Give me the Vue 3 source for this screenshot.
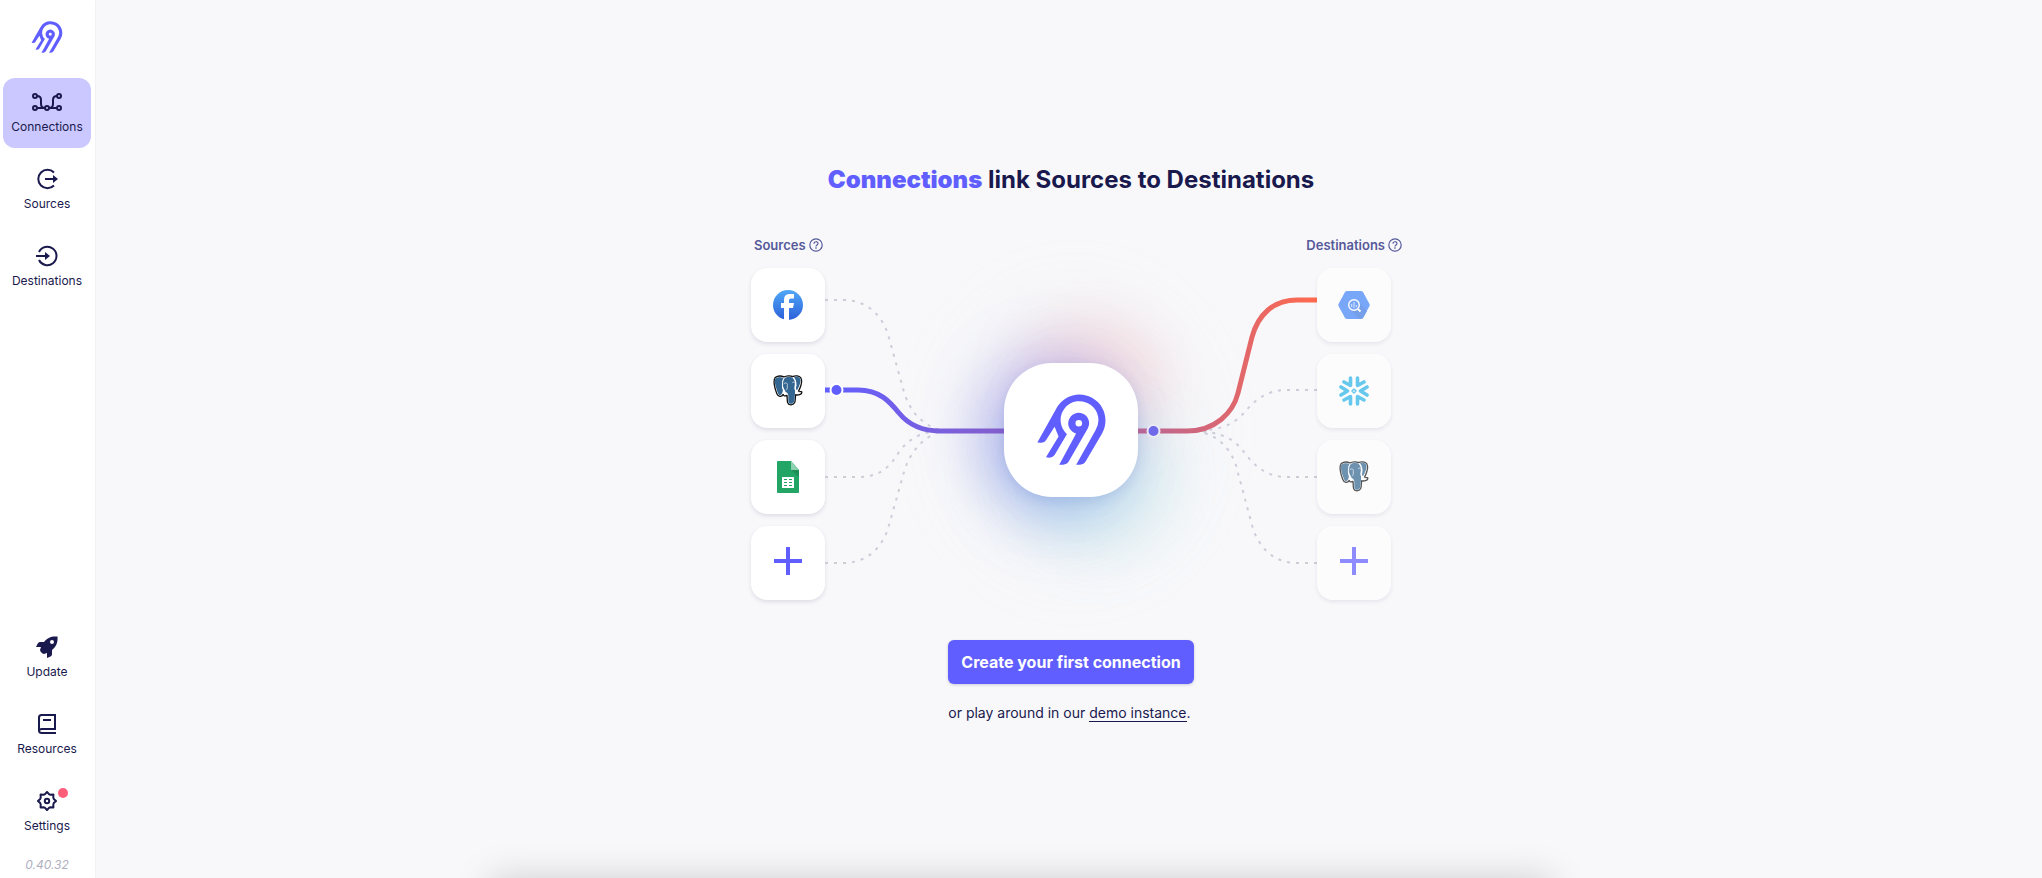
<script setup>
const leftDashes = [
  'M0 32H18C44 32 59 50 64 70L79 124C85 144 98 158 118 163',
  'M0 209H33C55 209 65 199 74 184C83 172 95 163 118 163',
  'M0 295H18C44 295 59 277 64 257L79 204C85 184 98 168 118 163',
]
const rightDashes = [
  'M492 122H462C440 122 428 134 419 145C410 154 400 163 365 163',
  'M492 209H462C440 209 428 196 419 184C410 173 400 163 365 163',
  'M492 295H472C448 295 433 279 427 257L413 205C408 180 390 163 365 163',
]
</script>

<template>
  <svg class="defs" width="0" height="0" aria-hidden="true">
    <symbol id="logo" viewBox="110 102 208 214">
      <path d="M228 315L286.4 211A57 57 0 1 0 200 223L163 286Q157 294 147 294L137 293L175 230L163 201L136 243Q131 250 120 249L111 248L170 143A78.500 78.500 0 0 1 238 103.500A78.500 78.500 0 0 1 306 221L257 305Q251 315 240 315Z" />
      <path fill-rule="evenodd" d="M177 315L228 221A31.500 31.500 0 1 1 263 206L206 305Q200 315 189 315ZM236 180A10 10 0 1 0 236 200A10 10 0 1 0 236 180Z" />
    </symbol>
    <symbol id="elephant" viewBox="40 286 90 94">
      <path class="eo" d="M46 294C54 288 66 289 73 292C79 288 93 287 99 291C107 287 119 288 124 295C130 306 123 323 117 335C120 338 127 334 127 339C127 345 115 348 108 346C107 354 108 363 105 370C100 379 86 378 84 370C82 363 83 356 82 348C76 351 70 349 71 344C65 355 55 352 51 342C45 328 39 303 46 294Z" />
      <path class="ef" d="M47 297C54 291 66 293 72 295C66 302 66 316 68 327C71 333 69 340 64 346C59 350 56 345 53 337C48 322 42 304 47 297Z" />
      <path class="ef" d="M103 293C111 290 118 291 122 297C125 306 119 321 112 332C108 328 109 322 110 316C110 306 108 299 103 293Z" />
      <path class="ef" d="M72 300C77 289 96 289 102 298C108 306 107 318 105 326C108 337 106 345 105 353C105 361 105 371 97 373C85 375 86 366 86 354C86 347 86 342 81 340C76 336 73 330 72 326C68 318 68 307 72 300Z" />
      <path class="ew" d="M72 314C75 308 84 308 83 318C83 325 83 329 79 332M70 327C76 330 75 335 73 341C76 337 82 339 84 347M98 309C103 306 107 308 107 313C106 320 104 326 107 331C110 337 117 338 122 339M74 294C68 302 67 318 69 328M101 294C108 301 111 309 109 323" />
    </symbol>
    <symbol id="plus" viewBox="0 0 28 32">
      <path d="M12 0H16V12H28V16H16V28H12V16H0V12H12Z" />
    </symbol>
    <symbol id="help" viewBox="0 0 14 14">
      <circle cx="7" cy="7" r="6.200" fill="none" stroke="currentColor" stroke-width="1.200" />
      <path d="M5 5.700C5 3.100 9 3.100 9 5.500C9 7 7 6.900 7 8.400" fill="none" stroke="currentColor" stroke-width="1.200" />
      <rect x="6.300" y="9.300" width="1.400" height="1.400" fill="currentColor" />
    </symbol>
  </svg>

  <div class="app">
    <nav class="sidebar">
      <a class="brand" href="#" aria-label="Airbyte"><svg><use href="#logo" /></svg></a>
      <div class="group">
        <a class="item active" href="#connections">
          <span class="icon">
            <svg width="30" height="20" viewBox="0 0 30 20" fill="none" stroke="currentColor" stroke-width="2">
              <circle cx="3" cy="4" r="2" /><circle cx="27" cy="4" r="2" />
              <circle cx="3" cy="16" r="2" /><circle cx="15" cy="16" r="2" /><circle cx="27" cy="16" r="2" />
              <path d="M5 4C8 4 9 6 9 8V12C9 15 10 16 13 16M25 4C22 4 21 6 21 8V12C21 15 20 16 17 16M5 16H13M17 16H25" />
            </svg>
          </span>
          <span>Connections</span>
        </a>
        <a class="item" href="#sources">
          <span class="icon">
            <svg width="22" height="22" viewBox="0 0 22 22">
              <path d="M18 4.500A9.200 9.200 0 1 0 18 17.500" fill="none" stroke="currentColor" stroke-width="2" />
              <path d="M9 10H17V7L22 11L17 15V12H9Z" fill="currentColor" />
            </svg>
          </span>
          <span>Sources</span>
        </a>
        <a class="item" href="#destinations">
          <span class="icon">
            <svg width="22" height="22" viewBox="0 0 22 22">
              <path d="M3 7A9.200 9.200 0 1 1 3 15" fill="none" stroke="currentColor" stroke-width="2" />
              <path d="M0 10H9V7L14 11L9 15V12H0Z" fill="currentColor" />
            </svg>
          </span>
          <span>Destinations</span>
        </a>
      </div>
      <div class="group bottom">
        <a class="item" href="#update">
          <span class="icon">
            <svg width="22" height="22" viewBox="0 0 22 22" fill="currentColor">
              <path fill-rule="evenodd" d="M21.500 .5C15 0 11 2 8 6H4C2.500 6 2 7 1.500 8L0 11H5L4 14C4.500 16 6 17.500 8 18L11 17V22L14.500 20.500C15.500 20 16 19 16 18V14C20 11 22 7 21.500 .5ZM16 4A2 2 0 1 1 16 8A2 2 0 1 1 16 4Z" />
            </svg>
          </span>
          <span>Update</span>
        </a>
        <a class="item" href="#resources">
          <span class="icon">
            <svg width="18" height="20" viewBox="0 0 18 20" fill="none" stroke="currentColor" stroke-width="2">
              <path d="M18 19H4C2 19 1 18 1 16.500V3.500C1 2 2 1 3.500 1H17V15H4C2 15 1 16 1 17M5 6H13" />
            </svg>
          </span>
          <span>Resources</span>
        </a>
        <a class="item" href="#settings">
          <span class="icon">
            <svg width="20" height="20" viewBox="0 0 20 20" fill="none" stroke="currentColor" stroke-width="2" stroke-linejoin="round">
              <path d="M8 3.200L10 1L12 3.200L13.500 3.700L16.400 3.600L16.300 6.500L16.800 8L19 10L16.800 12L16.300 13.500L16.400 16.400L13.500 16.300L12 16.800L10 19L8 16.800L6.500 16.300L3.600 16.400L3.700 13.500L3.200 12L1 10L3.200 8L3.700 6.500L3.600 3.600L6.500 3.700Z" />
              <circle cx="10" cy="10" r="2.200" />
            </svg>
            <i class="alert"></i>
          </span>
          <span>Settings</span>
        </a>
      </div>
      <div class="version">0.40.32</div>
    </nav>

    <main class="main">
      <h1><b>Connections</b> link Sources to Destinations</h1>
      <div class="labels">
        <span>Sources <svg><use href="#help" /></svg></span>
        <span>Destinations <svg><use href="#help" /></svg></span>
      </div>
      <div class="stage">
        <div class="column">
          <button class="card" aria-label="Facebook">
            <svg width="30" height="30" viewBox="0 0 30 30">
              <defs><linearGradient id="fb" x2="0" y2="1"><stop stop-color="#50a8f8" /><stop offset="1" stop-color="#2b60d8" /></linearGradient></defs>
              <circle cx="15" cy="15" r="15" fill="url(#fb)" />
              <path d="M11 30V18H8V13H11V10C11 6 13 4 17 4H21V8.500H18C16.700 8.500 16 9.200 16 10.500V13H21L20 18H16V30Z" fill="#fff" />
            </svg>
          </button>
          <button class="card" aria-label="Postgres"><svg width="30" height="31"><use href="#elephant" /></svg></button>
          <button class="card" aria-label="Google Sheets">
            <svg width="22" height="32" viewBox="0 0 22 32">
              <path d="M1 0H14L22 9V31Q22 32 21 32H1Q0 32 0 31V1Q0 0 1 0Z" fill="#23a566" />
              <path d="M14 9H22V16Z" fill="#1c8f56" /><path d="M14 0L22 9H14Z" fill="#8ed1b1" />
              <path fill="#fff" fill-rule="evenodd" d="M5 16H17V27H5ZM7 18V19H10V18ZM12 18V19H15V18ZM7 21V22H10V21ZM12 21V22H15V21ZM7 24V25H10V24ZM12 24V25H15V24Z" />
            </svg>
          </button>
          <button class="card" aria-label="Add source"><svg width="28" height="32"><use href="#plus" /></svg></button>
        </div>
        <div class="flow">
          <i class="glow halo"></i><i class="glow pink"></i><i class="glow violet"></i><i class="glow blue"></i><i class="glow cyan"></i>
          <svg class="lines" viewBox="0 0 492 332" fill="none">
            <defs>
              <linearGradient id="route" gradientUnits="userSpaceOnUse" x1="0" y1="0" x2="492" y2="0">
                <stop stop-color="#615eff" /><stop offset=".24" stop-color="#7b5fdc" /><stop offset=".36" stop-color="#835ecb" />
                <stop offset=".64" stop-color="#b96896" /><stop offset=".76" stop-color="#d1667b" /><stop offset="1" stop-color="#ff6a4d" />
              </linearGradient>
            </defs>
            <g stroke="#cdcdd9" stroke-width="2" stroke-dasharray="3 6">
              <path v-for="d in leftDashes" :key="d" :d="d" />
              <path v-for="d in rightDashes" :key="d" :d="d" />
            </g>
            <g stroke="url(#route)" stroke-width="5">
              <path d="M0 122H33C55 122 65 134 74 145C83 156 95 163 115 163H180" />
              <path d="M312 163H362C390 163 408 145 413 125L427 69C433 47 448 32 472 32H492" />
            </g>
            <circle cx="11.500" cy="122" r="6" fill="#615eff" stroke="#fff" stroke-width="2" />
            <circle cx="328.500" cy="163" r="6" fill="#6f69ea" stroke="#e9e9f3" stroke-width="2" />
          </svg>
          <div class="hub"><svg><use href="#logo" /></svg></div>
        </div>
        <div class="column faded">
          <button class="card" aria-label="BigQuery">
            <svg width="32" height="30" viewBox="0 0 32 30">
              <path d="M9 1H23Q24 1 25 2L31.500 14Q32 15 31.500 16L25 28Q24 29 23 29H9Q8 29 7 28L.5 16Q0 15 .5 14L7 2Q8 1 9 1Z" fill="#4386fa" />
              <path d="M20 11L29 21L25 28Q24 29 23 29H21L12 19Z" fill="#3f7ae0" />
              <circle cx="16" cy="15" r="5.300" fill="#4386fa" stroke="#fff" stroke-width="1.400" />
              <path d="M20 19L22.500 21.500" stroke="#fff" stroke-width="1.800" />
              <path d="M13.700 14V17M16 12V18M18.300 15V17" stroke="#cfe0ff" stroke-width="1" />
            </svg>
          </button>
          <button class="card" aria-label="Snowflake">
            <svg width="30" height="30" viewBox="0 0 30 30" fill="none" stroke="#29b5e8" stroke-width="3.600" stroke-linecap="round" stroke-linejoin="round">
              <path d="M11.500 2V9.500L5 6M18.500 2V9.500L25 6M11.500 28V20.500L5 24M18.500 28V20.500L25 24M2 11L8.500 15L2 19M28 11L21.500 15L28 19" />
              <path d="M15 13L17 15L15 17L13 15Z" stroke-width="1.500" />
            </svg>
          </button>
          <button class="card" aria-label="Postgres"><svg width="30" height="31"><use href="#elephant" /></svg></button>
          <button class="card" aria-label="Add destination"><svg width="28" height="32"><use href="#plus" /></svg></button>
        </div>
      </div>
      <div class="actions">
        <button class="primary">Create your first connection</button>
        <p>or play around in our <a href="#demo">demo instance</a>.</p>
      </div>
    </main>
    <div class="tray"></div>
  </div>
</template>

<style>
body { background: #f8f8fb; }
</style>

<style scoped>
* { box-sizing: border-box; }
.defs { position: absolute; }
.app {
  display: flex;
  min-height: 100vh;
  font-family: Inter, "Liberation Sans", sans-serif;
  color: #1a194d;
}
.sidebar {
  display: flex;
  flex-direction: column;
  flex: none;
  width: 95px;
  padding: 21px 4px 5px 3px;
  background: #fff;
  box-shadow: 0 0 2px rgba(26, 25, 77, .08);
}
.brand { display: block; height: 32px; margin: 0 auto 25px; }
.brand svg { display: block; width: 32px; height: 32px; fill: #615eff; }
.group { display: flex; flex-direction: column; gap: 7px; }
.bottom { margin-top: auto; }
.item {
  display: flex;
  flex-direction: column;
  align-items: center;
  gap: 5px;
  height: 70px;
  padding-top: 12px;
  border-radius: 12px;
  color: #1a194d;
  font-size: 12px;
  line-height: 16px;
  text-decoration: none;
}
.active { background: #cbc8ff; }
.icon {
  position: relative;
  display: flex;
  align-items: center;
  justify-content: center;
  width: 30px;
  height: 24px;
}
.alert {
  position: absolute;
  top: -1px;
  right: -6px;
  width: 10px;
  height: 10px;
  border-radius: 50%;
  background: #ff5e7b;
}
.version {
  margin-top: 10px;
  color: #afafc1;
  font-size: 12px;
  line-height: 16px;
  font-style: italic;
  text-align: center;
}
.main {
  display: flex;
  flex: 1;
  flex-direction: column;
  align-items: center;
  justify-content: center;
  padding: 8px 0 0 5px;
}
h1 { margin: 0 0 41px; font-size: 24px; line-height: 32px; font-weight: 700; }
h1 b { color: #615eff; font-weight: 900; }
.labels {
  display: flex;
  justify-content: space-between;
  width: 662px;
  padding-left: 14px;
  margin-bottom: 15px;
  color: #565a9a;
  font-size: 13px;
  line-height: 16px;
  font-weight: 600;
}
.labels span { display: flex; align-items: center; gap: 3px; }
.labels svg { width: 14px; height: 14px; }
.stage { display: flex; }
.column { position: relative; display: flex; flex-direction: column; gap: 12px; }
.card {
  display: flex;
  align-items: center;
  justify-content: center;
  width: 74px;
  height: 74px;
  padding: 0;
  border: 0;
  border-radius: 16px;
  background: #fff;
  box-shadow: 0 2px 4px rgba(26, 25, 77, .12);
  fill: #615eff;
}
.faded .card { opacity: .7; }
.eo { fill: #fff; stroke: #111; stroke-width: 4px; }
.ef { fill: #336791; }
.ew { fill: none; stroke: #fff; stroke-width: 2px; }
.flow { position: relative; width: 492px; }
.lines { position: relative; display: block; width: 100%; }
.hub {
  position: absolute;
  top: 95px;
  left: 179px;
  display: flex;
  align-items: center;
  justify-content: center;
  width: 134px;
  height: 134px;
  border-radius: 48px;
  background: #fff;
  box-shadow: 0 4px 12px rgba(60, 80, 180, .12);
}
.hub svg { width: 69px; height: 71px; fill: #615eff; }
.glow { position: absolute; border-radius: 50%; filter: blur(28px); }
.halo { top: 20px; left: 120px; width: 260px; height: 290px; background: rgba(190, 200, 200, .08); }
.pink { top: 50px; left: 200px; width: 140px; height: 120px; background: rgba(255, 120, 120, .16); }
.violet { top: 83px; left: 153px; width: 150px; height: 150px; background: rgba(97, 80, 225, .29); }
.blue { top: 130px; left: 165px; width: 140px; height: 130px; background: rgba(60, 130, 230, .23); }
.cyan { top: 140px; left: 205px; width: 145px; height: 145px; background: rgba(100, 215, 215, .14); }
.actions { margin-top: 40px; }
.primary {
  display: block;
  height: 44px;
  padding: 0 13px;
  border: 0;
  border-radius: 6px;
  background: #615eff;
  box-shadow: 0 1px 3px rgba(26, 25, 77, .2);
  color: #fff;
  font: 700 16px/24px Inter, "Liberation Sans", sans-serif;
}
p { margin: 19px 0 0; font-size: 14px; line-height: 20px; }
p a { color: inherit; text-decoration: none; border-bottom: 1px solid; }
.tray {
  position: fixed;
  top: 100%;
  left: 24%;
  right: 24%;
  height: 100px;
  box-shadow: 0 0 36px rgba(0, 0, 0, .17);
}
</style>
